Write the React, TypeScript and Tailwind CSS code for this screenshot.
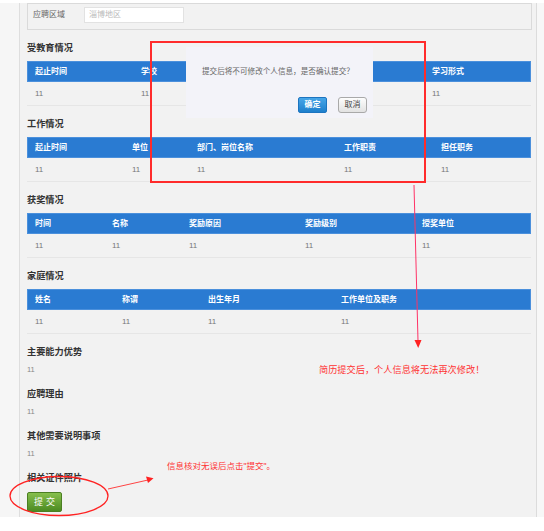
import React from 'react';

type Table = {
  title: string;
  cols: string;
  heads: string[];
};

// the confirm box hides the middle columns of the first table, so they stay blank
const tables: Table[] = [
  {
    title: '受教育情况',
    cols: 'grid-cols-[106px_97px_97px_97px_1fr]',
    heads: ['起止时间', '学校', '', '', '学习形式'],
  },
  {
    title: '工作情况',
    cols: 'grid-cols-[97px_65px_147px_97px_1fr]',
    heads: ['起止时间', '单位', '部门、岗位名称', '工作职责', '担任职务'],
  },
  {
    title: '获奖情况',
    cols: 'grid-cols-[77px_77px_116px_117px_1fr]',
    heads: ['时间', '名称', '奖励原因', '奖励级别', '授奖单位'],
  },
  {
    title: '家庭情况',
    cols: 'grid-cols-[87px_86px_133px_1fr]',
    heads: ['姓名', '称谓', '出生年月', '工作单位及职务'],
  },
];

const texts = ['主要能力优势', '应聘理由', '其他需要说明事项'];

function Heading({ children }: { children: React.ReactNode }) {
  return (
    <h3 className="mt-[11px] h-[14px] text-[9.2px] leading-[14px] font-bold text-[#333]">
      {children}
    </h3>
  );
}

function InfoTable({ table }: { table: Table }) {
  return (
    <div>
      <Heading>{table.title}</Heading>
      <div className="mt-[6px]">
        <div
          className={`grid ${table.cols} h-[21px] items-center bg-[#2a7bd2] border border-[#4b90dc] text-[8px] font-bold text-white`}
        >
          {table.heads.map((h, i) => (
            <div key={i} className="pl-[7px] whitespace-nowrap">
              {h}
            </div>
          ))}
        </div>
        <div
          className={`grid ${table.cols} h-[24px] items-center border-b border-[#e6e6e6] text-[8px] text-[#777]`}
        >
          {table.heads.map((h, i) => (
            <div key={i} className="pl-[8px]">
              {h ? '11' : ''}
            </div>
          ))}
        </div>
      </div>
    </div>
  );
}

function ConfirmBox() {
  return (
    <div className="absolute left-[186px] top-[47px] w-[187px] h-[71px] bg-[#f3f3f9] pt-[20px] pl-[16px] pr-[6px]">
      <p className="text-[7.6px] leading-[10px] text-[#666] whitespace-nowrap">
        提交后将不可修改个人信息，是否确认提交？
      </p>
      <div className="mt-[20px] flex justify-end gap-[11px]">
        <button className="w-[29px] h-[16px] rounded-[2px] border border-[#1c74c0] bg-gradient-to-b from-[#46a6e8] to-[#1d7fcc] text-[8px] font-bold leading-[14px] text-white">
          确定
        </button>
        <button className="w-[29px] h-[16px] rounded-[3px] border border-[#a9a9a9] bg-gradient-to-b from-[#fdfdfd] to-[#e2e2e2] text-[8px] leading-[14px] text-[#444]">
          取消
        </button>
      </div>
    </div>
  );
}

function Annotations() {
  return (
    <>
      <div className="absolute left-[150px] top-[41px] w-[276px] h-[142px] border-2 border-[#ff2b2b]" />
      <svg
        className="absolute left-0 top-0 pointer-events-none"
        width="544"
        height="531"
        viewBox="0 0 544 531"
      >
        <line x1="414" y1="185" x2="418" y2="341" stroke="#f36" strokeWidth="1" />
        <polygon points="414.5,340 421.5,340 418.2,348" fill="#f22" />
        <ellipse cx="59" cy="496" rx="49" ry="19.5" fill="none" stroke="#f22" strokeWidth="1.3" />
        <line x1="108" y1="489" x2="148" y2="480" stroke="#f44" strokeWidth="1" />
        <polygon points="146,476.5 148,483 153.5,478.2" fill="#f22" />
      </svg>
      <p className="absolute left-[319px] top-[364px] text-[9.2px] leading-[12px] text-[#ff3333] whitespace-nowrap">
        简历提交后，个人信息将无法再次修改！
      </p>
      <p className="absolute left-[167px] top-[460px] text-[8.5px] leading-[12px] text-[#ff3333] whitespace-nowrap">
        信息核对无误后点击"提交"。
      </p>
    </>
  );
}

export default function App() {
  return (
    <div className="relative w-[544px] h-[531px] overflow-hidden bg-white font-['Liberation_Sans','Noto_Sans_CJK_SC',sans-serif]">
      <div className="mt-[3px] flex h-[514px]">
        <div className="w-[20px] shrink-0 bg-[#f6f6f6] border-r border-[#dedede]" />
        <div className="w-[516px] shrink-0 bg-[#f2f2f2] pl-[7px] pr-[5px]">
          <div className="w-[505px] h-[27px] border border-[#dadada] pt-[3px] pl-[5px] flex items-start">
            <span className="w-[51px] text-[8px] leading-[16px] text-[#666]">应聘区域</span>
            <div className="w-[100px] h-[16px] bg-white border border-[#e2e2e2] pl-[4px] text-[8px] leading-[14px] text-[#bbb]">
              淄博地区
            </div>
          </div>

          {tables.map((t) => (
            <InfoTable key={t.title} table={t} />
          ))}

          {texts.map((t) => (
            <div key={t}>
              <Heading>{t}</Heading>
              <p className="mt-[5px] h-[12px] text-[7.5px] leading-[12px] text-[#888]">11</p>
            </div>
          ))}

          <Heading>相关证件照片</Heading>
          <button className="mt-[7px] w-[35px] h-[20px] rounded-[2px] border border-[#4b7f22] bg-gradient-to-b from-[#86bf4c] to-[#4c8b21] text-[9px] leading-[18px] tracking-[3px] pl-[3px] text-white">
            提交
          </button>
        </div>
        <div className="flex-1 bg-[#f7f7f7] border-l border-[#dcdcdc]" />
      </div>

      <ConfirmBox />
      <Annotations />
    </div>
  );
}
